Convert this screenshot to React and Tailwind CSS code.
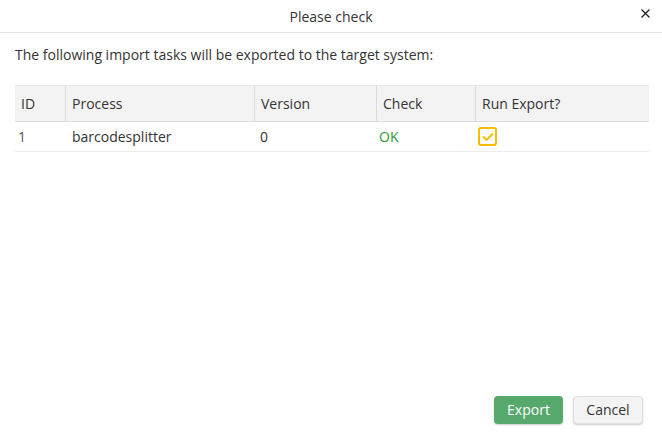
import React from 'react';

const cols = [
  { key: 'id', label: 'ID', w: 'w-[50px]' },
  { key: 'process', label: 'Process', w: 'w-[189px]' },
  { key: 'version', label: 'Version', w: 'w-[122px]' },
  { key: 'check', label: 'Check', w: 'w-[99px]' },
  { key: 'run', label: 'Run Export?', w: 'flex-1' },
];

const Checkbox = () => (
  <span className="inline-flex items-center justify-center w-[19px] h-[19px] rounded-[3px] border-2 border-[#f7bd00] bg-white">
    <svg width="12" height="10" viewBox="0 0 12 10" fill="none">
      <path d="M1.5 5 L4.5 8 L10.5 2" stroke="#f7bd00" strokeWidth="1.8" strokeLinecap="round" strokeLinejoin="round" />
    </svg>
  </span>
);

export default function App() {
  return (
    <div className="w-[662px] h-[442px] bg-white flex flex-col text-[#333] font-['Open_Sans',sans-serif]">
      <div className="relative h-[33px] border-b border-[#e2e2e2] flex items-center justify-center">
        <span className="text-[14px] text-[#333]">Please check</span>
        <svg className="absolute right-[12px] top-[9px]" width="9" height="9" viewBox="0 0 9 9">
          <path d="M0.5 0.5 L8.5 8.5 M8.5 0.5 L0.5 8.5" stroke="#222" strokeWidth="1.3" />
        </svg>
      </div>

      <div className="flex-1 px-[15px] pt-[11px]">
        <p className="text-[14px] text-[#333]">The following import tasks will be exported to the target system:</p>

        <div className="mt-[20px] w-[634px] text-[14px]">
          <div className="flex h-[37px] bg-[#f3f3f3] border-t border-[#e8e8e8] border-b border-b-[#dcdcdc]">
            {cols.map((c, i) => (
              <div key={c.key} className={`${c.w} flex items-center px-[6px] ${i > 0 ? 'border-l border-[#dcdcdc]' : ''}`}>
                {c.label}
              </div>
            ))}
          </div>
          <div className="flex h-[30px] border-b border-[#ececec]">
            <div className="w-[50px] flex items-center px-[3px] text-[#555]">1</div>
            <div className="w-[189px] flex items-center px-[7px]">barcodesplitter</div>
            <div className="w-[122px] flex items-center px-[6px]">0</div>
            <div className="w-[99px] flex items-center px-[3px] text-[#2f9a2f]">OK</div>
            <div className="flex-1 flex items-center px-[3px]"><Checkbox /></div>
          </div>
        </div>
      </div>

      <div className="flex justify-end gap-[10px] pr-[19px] pb-[18px]">
        <button className="w-[69px] h-[28px] rounded-[4px] bg-[#57a86d] text-white text-[14px] leading-none shadow-[0_1px_2px_rgba(0,0,0,0.2)]">Export</button>
        <button className="w-[70px] h-[28px] rounded-[4px] bg-[#f3f3f3] border border-[#e0e0e0] text-[#333] text-[14px] leading-none shadow-[0_1px_2px_rgba(0,0,0,0.2)]">Cancel</button>
      </div>
    </div>
  );
}
